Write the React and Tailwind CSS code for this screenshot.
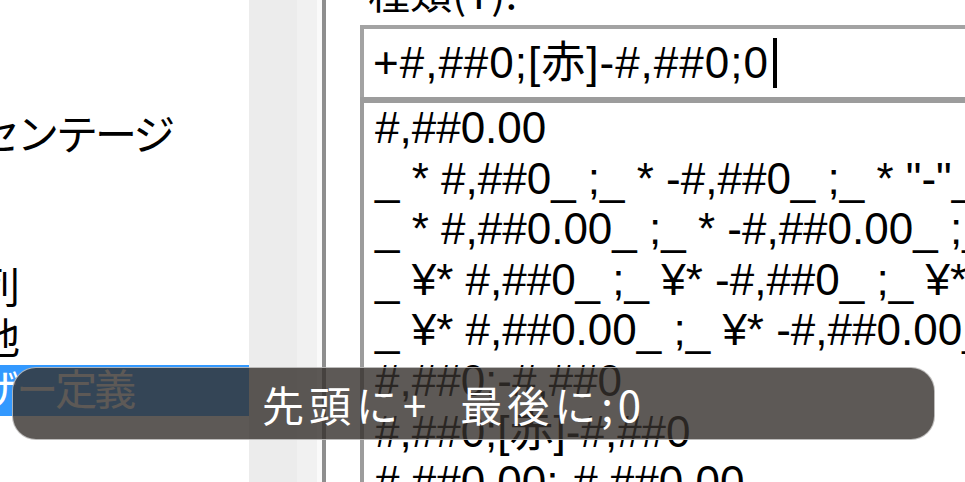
import React from "react";

const categories = [
  { label: "日付" },
  { label: "時刻" },
  { label: "パーセンテージ" },
  { label: "分数" },
  { label: "指数" },
  { label: "文字列" },
  { label: "その他" },
  { label: "ユーザー定義", selected: true },
];

const formats = [
  "#,##0.00",
  '_ * #,##0_ ;_ * -#,##0_ ;_ * "-"_ ;_ @_ ',
  '_ * #,##0.00_ ;_ * -#,##0.00_ ;_ * "-"??_ ;_ @_ ',
  '_ ¥* #,##0_ ;_ ¥* -#,##0_ ;_ ¥* "-"_ ;_ @_ ',
  '_ ¥* #,##0.00_ ;_ ¥* -#,##0.00_ ;_ ¥* "-"??_ ;_ @_ ',
  "#,##0;-#,##0",
  "#,##0;[赤]-#,##0",
  "#,##0.00;-#,##0.00",
];

const App = () => {
  return (
    <div className="relative flex h-[482px] w-[965px] overflow-hidden bg-white font-['Liberation_Sans','Noto_Sans_CJK_JP',sans-serif] text-black">
      {/* category list, scrolled so its left side is cut off */}
      <div className="w-[249px] shrink-0 overflow-hidden pt-[8px]">
        {categories.map((c) => (
          <div
            key={c.label}
            className={
              "h-[51px] whitespace-nowrap " +
              (c.selected ? "bg-[#3399ff] text-white" : "")
            }
          >
            <span className="-ml-[100px] block font-['Noto_Sans_CJK_JP',sans-serif] text-[42px] leading-[44px] tracking-[-3px]">
              {c.label}
            </span>
          </div>
        ))}
      </div>

      {/* scrollbar track */}
      <div className="flex w-[73px] shrink-0">
        <div className="w-[48px] bg-[#ececec]" />
        <div className="w-[20px] bg-[#f1f1f1]" />
        <div className="w-[5px] bg-[#fafafa]" />
      </div>
      <div className="w-[4px] shrink-0 bg-[#8e8e8e]" />
      <div className="w-[34px] shrink-0" />

      {/* type field + format list */}
      <div className="flex min-w-0 flex-1 flex-col">
        <div className="h-[25px] shrink-0 overflow-hidden">
          <div className="-mt-[30px] pl-[8px] font-['Noto_Sans_CJK_JP',sans-serif] text-[42px] leading-[42px]">
            種類(T):
          </div>
        </div>
        <div className="flex h-[72px] shrink-0 items-center border-l-4 border-t-4 border-[#a3a3a3] pl-[9px]">
          <span className="whitespace-pre text-[44px] leading-[68px] tracking-[1px]">
            +#,##0;[赤]-#,##0;0
          </span>
          <span className="ml-[4px] h-[50px] w-[4px] bg-black" />
        </div>
        <div className="min-h-0 flex-1 overflow-hidden border-l-4 border-t-[6px] border-[#9c9c9c] pl-[11px]">
          {formats.map((f) => (
            <div key={f} className="whitespace-pre text-[44px] leading-[50.6px]">
              {f}
            </div>
          ))}
        </div>
      </div>

      {/* caption overlay */}
      <div className="absolute left-[12px] top-[367px] flex h-[73px] w-[923px] items-center rounded-[24px] border border-white/60 bg-[#35302c]/80 pl-[249px]">
        <span className="whitespace-pre font-['Noto_Sans_CJK_JP',sans-serif] text-[42px] leading-none tracking-[5px] text-white">
          先頭に+  最後に;0
        </span>
      </div>
    </div>
  );
};

export default App;
